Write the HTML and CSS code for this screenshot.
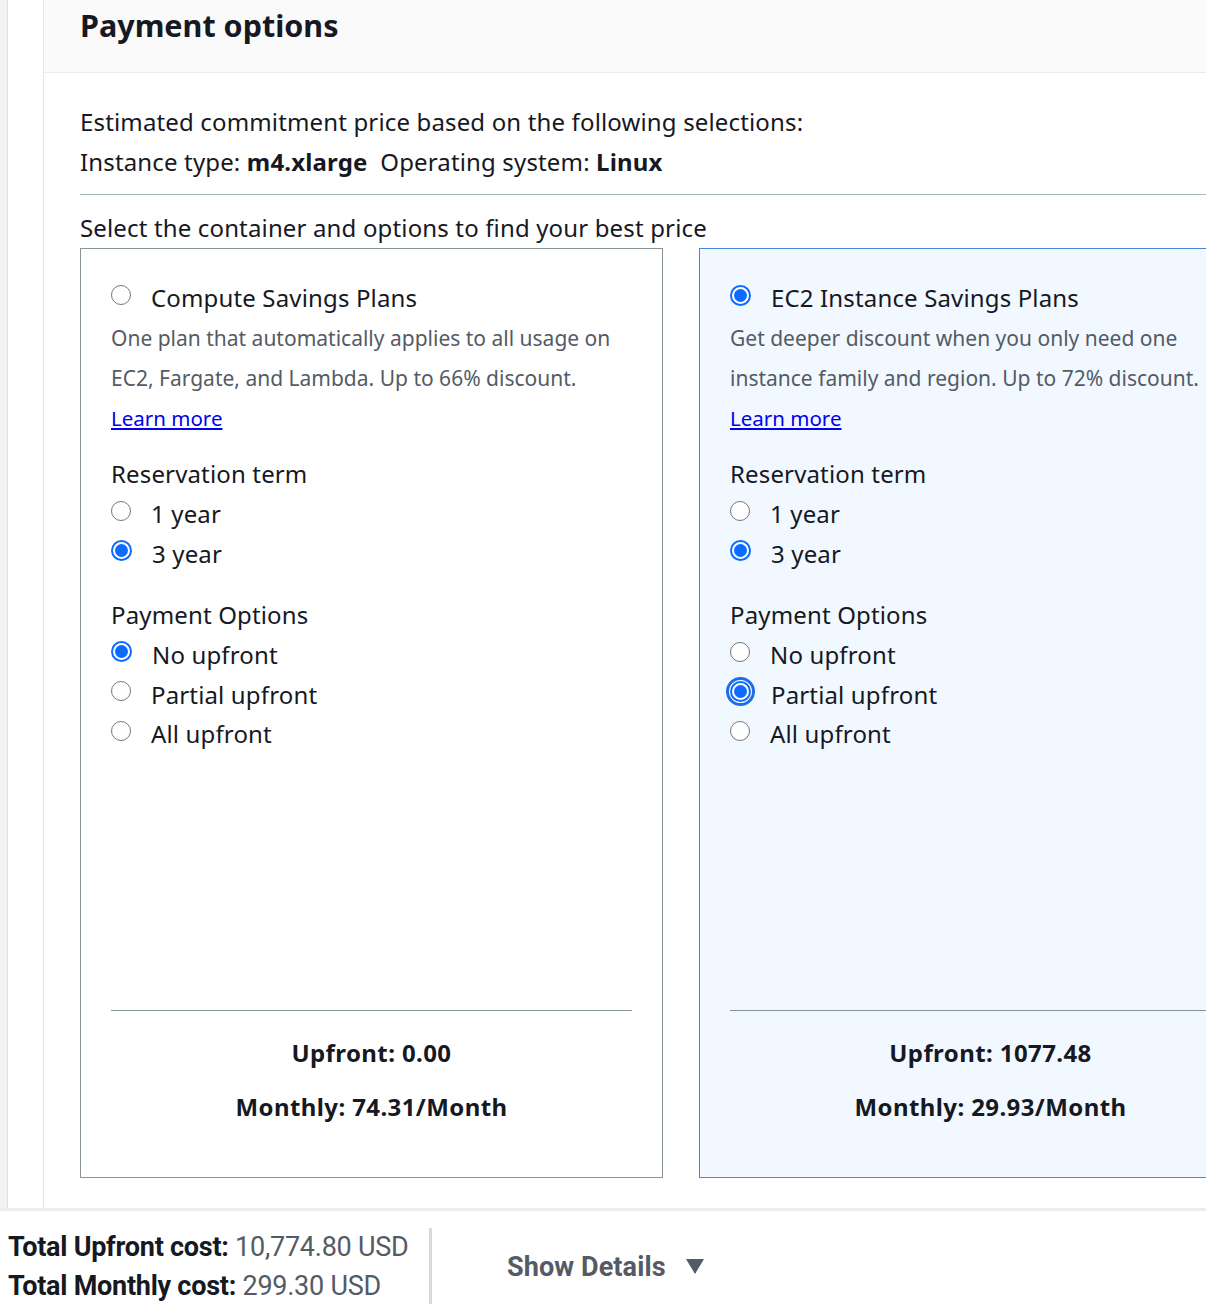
FILE: index.html
```html
<!DOCTYPE html>
<html>
<head>
<meta charset="utf-8">
<link rel="stylesheet" href="styles.css">
</head>
<body>
<div class="page">
  <div class="rail"></div>
  <div class="gutter"></div>
  <div class="panel">
    <div class="panel-header"><h2 class="title">Payment options</h2></div>
    <div class="panel-body">
      <p class="line">Estimated commitment price based on the following selections:</p>
      <p class="line">Instance type: <b>m4.xlarge</b>&nbsp; Operating system: <b>Linux</b></p>
      <div class="rule"></div>
      <p class="line select">Select the container and options to find your best price</p>
      <div class="cards">
        <div class="card">
          <div class="opt plan"><span class="radio"></span><span>Compute Savings Plans</span></div>
          <p class="desc">One plan that automatically applies to all usage on EC2, Fargate, and Lambda. Up to 66% discount.</p>
          <a class="link" href="#">Learn more</a>
          <div class="group">
            <div class="group-title">Reservation term</div>
            <div class="opt"><span class="radio"></span><span>1 year</span></div>
            <div class="opt"><span class="radio on"></span><span>3 year</span></div>
          </div>
          <div class="group">
            <div class="group-title">Payment Options</div>
            <div class="opt"><span class="radio on"></span><span>No upfront</span></div>
            <div class="opt"><span class="radio"></span><span>Partial upfront</span></div>
            <div class="opt"><span class="radio"></span><span>All upfront</span></div>
          </div>
          <div class="card-foot">
            <div class="price">Upfront: 0.00</div>
            <div class="price second">Monthly: 74.31/Month</div>
          </div>
        </div>
        <div class="card selected">
          <div class="opt plan"><span class="radio on"></span><span>EC2 Instance Savings Plans</span></div>
          <p class="desc">Get deeper discount when you only need one instance family and region. Up to 72% discount.</p>
          <a class="link" href="#">Learn more</a>
          <div class="group">
            <div class="group-title">Reservation term</div>
            <div class="opt"><span class="radio"></span><span>1 year</span></div>
            <div class="opt"><span class="radio on"></span><span>3 year</span></div>
          </div>
          <div class="group">
            <div class="group-title">Payment Options</div>
            <div class="opt"><span class="radio"></span><span>No upfront</span></div>
            <div class="opt"><span class="radio on focus"></span><span>Partial upfront</span></div>
            <div class="opt"><span class="radio"></span><span>All upfront</span></div>
          </div>
          <div class="card-foot">
            <div class="price">Upfront: 1077.48</div>
            <div class="price second">Monthly: 29.93/Month</div>
          </div>
        </div>
      </div>
    </div>
  </div>
</div>
<div class="footer">
  <div class="totals">
    <div class="total"><b>Total Upfront cost:</b> 10,774.80 USD</div>
    <div class="total"><b>Total Monthly cost:</b> 299.30 USD</div>
  </div>
  <div class="details">Show Details <span class="caret"></span></div>
</div>
</body>
</html>
```
FILE: styles.css
```css
html, body {
  margin: 0;
  padding: 0;
  background: #ffffff;
}
body {
  font-family: "Noto Sans", "Open Sans", sans-serif;
  color: #16191f;
  overflow: hidden;
  height: 1304px;
}
.page {
  display: flex;
  height: 1208px;
  overflow: hidden;
}
.rail {
  width: 7px;
  background: #f2f3f3;
  border-right: 1px solid #dfe2e2;
  flex: none;
}
.gutter {
  width: 35px;
  flex: none;
}
.panel {
  flex: 1;
  border-left: 1px solid #e4e7e7;
  min-width: 0;
  overflow: hidden;
}
.panel-header {
  height: 72px;
  background: #fafafa;
  border-bottom: 1px solid #eaeded;
  padding-left: 36px;
}
.title {
  margin: 0;
  font-size: 30.5px;
  line-height: 50px;
  font-weight: 700;
}
.panel-body {
  padding: 29px 0 0 36px;
}
.line {
  margin: 0;
  font-size: 24px;
  letter-spacing: 0.15px;
  line-height: 40px;
}
.rule {
  height: 1px;
  background: #aab7b8;
  margin: 12px 0 13px;
}
.cards {
  display: flex;
  gap: 36px;
}
.card {
  flex: none;
  width: 521px;
  height: 899px;
  border: 1px solid #879596;
  padding: 29px 30px 0 30px;
  display: flex;
  flex-direction: column;
  background: #ffffff;
}
.card.selected {
  background: #f1f8ff;
  border-color: #4a86d8;
}
.opt {
  display: flex;
  align-items: center;
  font-size: 24px;
  letter-spacing: 0.15px;
  line-height: 39.5px;
  gap: 20px;
}
.opt.plan {
  line-height: 40px;
}
.radio {
  flex: none;
  width: 18px;
  height: 18px;
  border: 1.5px solid #767676;
  border-radius: 50%;
  background: #ffffff;
  margin-top: -6px;
  position: relative;
}
.radio.on {
  border: 2px solid #0b6cff;
  width: 17px;
  height: 17px;
}
.radio.on::after {
  content: "";
  position: absolute;
  left: 2px;
  top: 2px;
  width: 13px;
  height: 13px;
  border-radius: 50%;
  background: #0b6cff;
}
.radio.focus {
  outline: 3px solid #1a6fe8;
  outline-offset: 1px;
  border-radius: 50%;
  box-shadow: 0 0 0 1px #ffffff;
}
.desc {
  margin: 0;
  font-size: 21px;
  line-height: 40px;
  color: #545b64;
}
.link {
  font-size: 20.5px;
  line-height: 40px;
  color: #0000ee;
  text-decoration: underline;
  align-self: flex-start;
}
.group {
  margin-top: 16px;
}
.group + .group {
  margin-top: 22px;
}
.group-title {
  font-size: 24px;
  letter-spacing: 0.15px;
  line-height: 40px;
}
.card-foot {
  margin-top: auto;
  border-top: 1px solid #879596;
  padding: 22px 0 50px;
  text-align: center;
}
.selected .card-foot {
  margin-right: -30px;
}
.price {
  font-size: 24px;
  letter-spacing: 0.4px;
  line-height: 40px;
  font-weight: 700;
}
.price.second {
  margin-top: 14px;
}
.selected .price {
  padding-right: 30px;
}
.footer {
  border-top: 3px solid #eaeded;
  display: flex;
  align-items: stretch;
  height: 93px;
  font-family: Roboto, "Noto Sans", sans-serif;
}
.totals {
  padding: 0 0 0 8px;
  margin-top: 17px;
  width: 421px;
  border-right: 3px solid #d5dbdb;
  white-space: nowrap;
}
.total {
  font-size: 27px;
  letter-spacing: -0.25px;
  line-height: 39px;
  color: #545b64;
}
.total b {
  color: #16191f;
  font-weight: 700;
}
.details {
  margin-left: 75px;
  align-self: center;
  margin-top: 18px;
  font-size: 27px;
  letter-spacing: 0.1px;
  font-weight: 700;
  color: #545b64;
  display: flex;
  align-items: center;
  gap: 20px;
  white-space: nowrap;
}
.caret {
  width: 0;
  height: 0;
  border-left: 9px solid transparent;
  border-right: 9px solid transparent;
  border-top: 15px solid #545b64;
}
```
